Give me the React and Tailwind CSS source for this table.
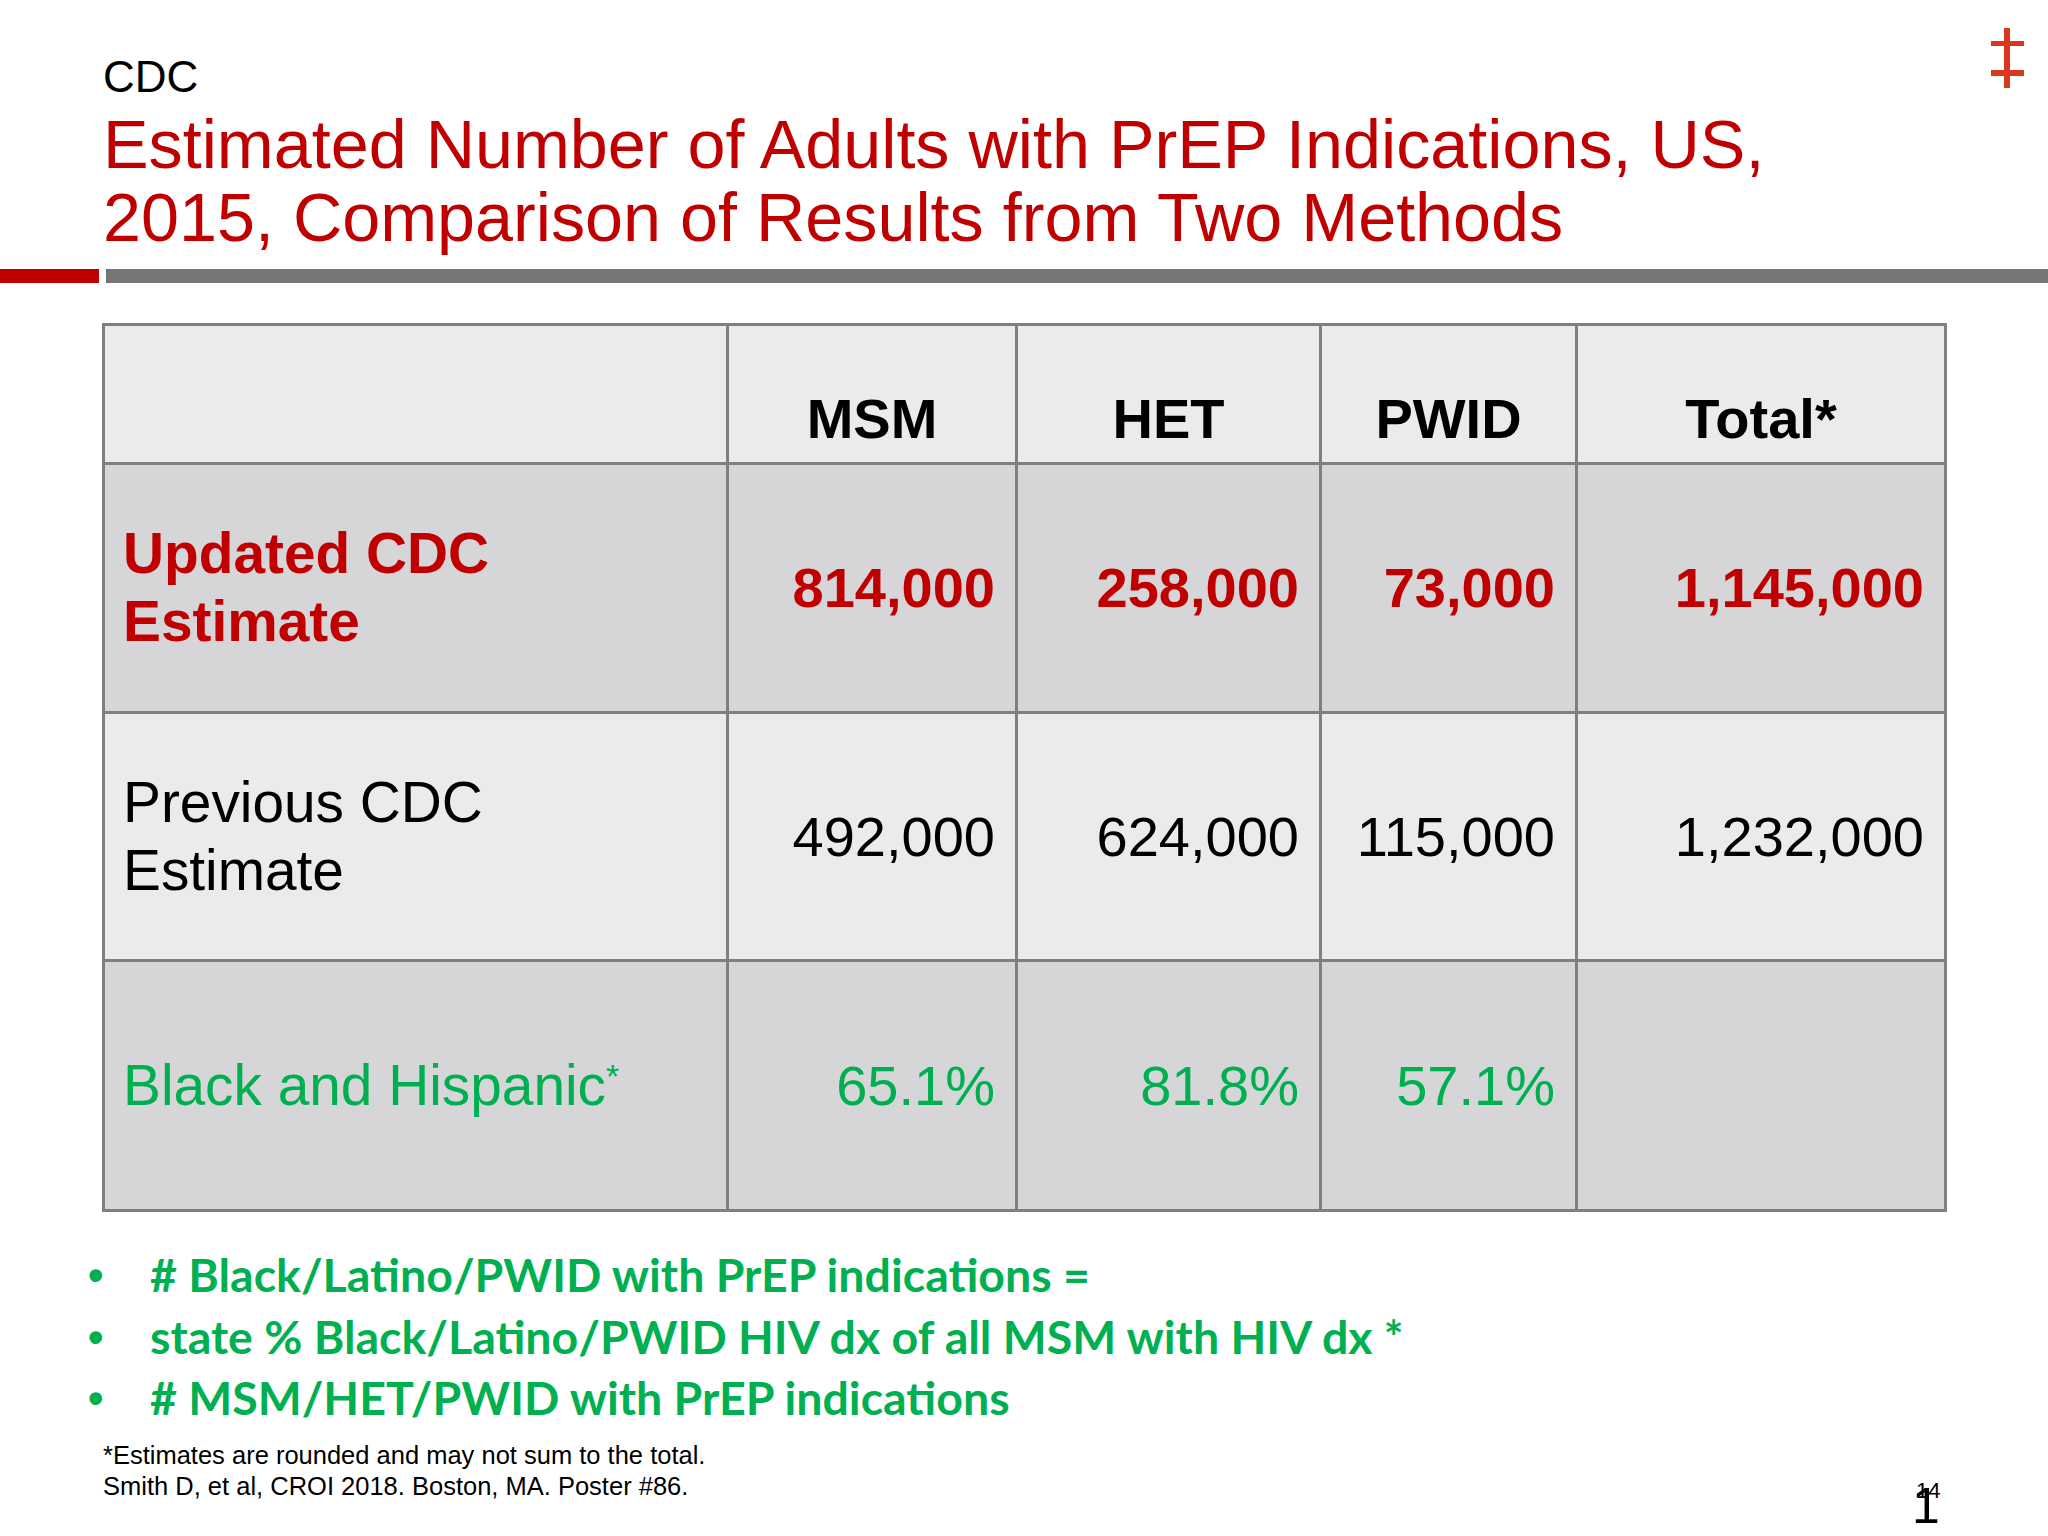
import React from 'react';

const rows = [
  {
    label: ['Updated CDC', 'Estimate'],
    values: ['814,000', '258,000', '73,000', '1,145,000'],
    bg: 'bg-[#D6D5D8]',
    text: 'text-[#C00000] font-bold',
  },
  {
    label: ['Previous CDC', 'Estimate'],
    values: ['492,000', '624,000', '115,000', '1,232,000'],
    bg: 'bg-[#EBEAED]',
    text: 'text-black',
  },
  {
    label: null,
    values: ['65.1%', '81.8%', '57.1%', ''],
    bg: 'bg-[#D6D5D8]',
    text: 'text-[#00B050]',
  },
];

const bullets = [
  '# Black/Latino/PWID with PrEP indications =',
  'state % Black/Latino/PWID HIV dx of all MSM with HIV dx *',
  '# MSM/HET/PWID with PrEP indications',
];

function Logo() {
  return (
    <svg width="33" height="60" viewBox="0 0 33 60" className="absolute left-[1991px] top-[28px]">
      <rect x="13" y="0" width="6" height="60" fill="#D9381E" />
      <rect x="0" y="13" width="33" height="5" fill="#D9381E" />
      <rect x="0" y="42" width="33" height="6" fill="#D9381E" />
    </svg>
  );
}

export default function App() {
  return (
    <div className="relative w-[2048px] h-[1536px] overflow-hidden bg-white font-['Liberation_Sans',Arial,sans-serif]">
      <Logo />

      {/* heading */}
      <div className="pl-[103px] pt-[55px]">
        <div className="text-[44px] leading-[44px] text-black">CDC</div>
        <h1 className="mt-[9px] text-[68.3px] leading-[73px] text-[#C00000] whitespace-nowrap">
          Estimated Number of Adults with PrEP Indications, US,
          <br />
          2015, Comparison of Results from Two Methods
        </h1>
      </div>

      <div className="mt-[15px] flex h-[14px]">
        <div className="w-[99px] bg-[#C00000]" />
        <div className="ml-[7px] flex-1 bg-[#767676]" />
      </div>

      {/* table */}
      <div className="ml-[102px] mt-[40px] grid w-[1845px] grid-cols-[624px_289px_304px_256px_369px] grid-rows-[139px_249px_248px_250px] border-l-[3px] border-t-[3px] border-[#7F7F7F] text-[56px]">
        <div className="border-r-[3px] border-b-[3px] border-[#7F7F7F] bg-[#EBEAED]" />
        {['MSM', 'HET', 'PWID', 'Total*'].map((h) => (
          <div
            key={h}
            className="flex items-end justify-center border-r-[3px] border-b-[3px] border-[#7F7F7F] bg-[#EBEAED] pb-[15px] font-bold leading-[56px] text-black"
          >
            {h}
          </div>
        ))}

        {rows.map((r, i) => (
          <React.Fragment key={i}>
            <div className={`flex items-center border-r-[3px] border-b-[3px] border-[#7F7F7F] pl-[18px] text-[56.8px] leading-[68px] ${r.bg} ${r.text}`}>
              {r.label ? (
                <div>
                  {r.label[0]}
                  <br />
                  {r.label[1]}
                </div>
              ) : (
                <div>
                  Black and Hispanic<sup className="text-[34px]">*</sup>
                </div>
              )}
            </div>
            {r.values.map((v, j) => (
              <div
                key={j}
                className={`flex items-center justify-end border-r-[3px] border-b-[3px] border-[#7F7F7F] pr-[20px] leading-[68px] ${r.bg} ${r.text}`}
              >
                {v}
              </div>
            ))}
          </React.Fragment>
        ))}
      </div>

      {/* bullets */}
      <ul className="mt-[32px] font-['Lato',sans-serif] text-[46.5px] font-bold leading-[61.5px] text-[#00B050]">
        {bullets.map((b) => (
          <li key={b} className="flex whitespace-nowrap">
            <span className="w-[150px] pl-[88px] font-['Liberation_Sans',Arial,sans-serif] text-[44px]">•</span>
            <span>{b}</span>
          </li>
        ))}
      </ul>

      {/* footnote */}
      <div className="mt-[11px] pl-[103px] text-[25.5px] leading-[31px] text-black">
        <div>*Estimates are rounded and may not sum to the total.</div>
        <div>Smith D, et al, CROI 2018. Boston, MA. Poster #86.</div>
      </div>

      {/* slide number */}
      <span className="absolute left-[1916px] top-[1480px] text-[22px] leading-none text-black">14</span>
      <span className="absolute left-[1912px] top-[1481px] text-[50px] leading-none text-black">1</span>
    </div>
  );
}
